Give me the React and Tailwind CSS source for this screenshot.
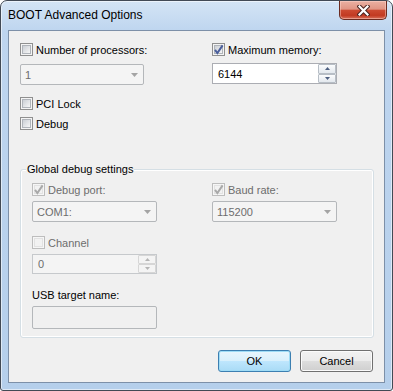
import React from 'react';

const ui = "font-['Liberation_Sans',Arial,sans-serif] text-[11px] leading-[14px]";

function CheckBox({ checked, disabled, label }) {
    return (
        <div className="flex h-[13px] items-center">
            <span
                className={`relative block h-[13px] w-[13px] shrink-0 border p-px ${
                    disabled ? 'border-[#bdbdbd] bg-[#f6f6f6]' : 'border-[#8f8f8f] bg-[#f4f4f4]'
                }`}
            >
                <span
                    className={`block h-full w-full border ${
                        disabled
                            ? 'border-[#e2e2e2] bg-[#f2f2f2]'
                            : 'border-[#b0b4ba] bg-[linear-gradient(135deg,#cbcfd5,#f6f6f6)]'
                    }`}
                />
                {checked && (
                    <svg className="absolute left-0 top-0" width="11" height="11" viewBox="0 0 11 11">
                        <path
                            d="M2 5.8 L4.4 9 L9.6 1.4"
                            fill="none"
                            stroke={disabled ? '#a9a9a9' : '#4b5f9c'}
                            strokeWidth="2"
                        />
                    </svg>
                )}
            </span>
            <span className={`ml-[3px] whitespace-nowrap ${disabled ? 'text-[#6d6d6d]' : 'text-black'}`}>{label}</span>
        </div>
    );
}

function ComboBox({ value, width = 'w-[125px]', className = '' }) {
    return (
        <div
            className={`flex h-[21px] ${width} items-center justify-between rounded-[2px] border border-[#b4b7ba] bg-[#f4f4f4] pl-[4px] pr-[5px] text-[#6d6d6d] ${className}`}
        >
            <span>{value}</span>
            <svg width="7" height="4" viewBox="0 0 7 4">
                <path d="M0 0 H7 L3.5 4 Z" fill="#a4a4a4" />
            </svg>
        </div>
    );
}

function SpinArrow({ up, disabled }) {
    return (
        <span
            className={`flex flex-1 items-center justify-center rounded-[1px] border ${
                disabled
                    ? 'border-[#d6d6d6] bg-[#f4f4f4]'
                    : 'border-[#b7bec6] bg-[linear-gradient(#fbfcfd,#e3e8ee)]'
            }`}
        >
            <svg width="5" height="3" viewBox="0 0 5 3">
                <path d={up ? 'M0 3 H5 L2.5 0 Z' : 'M0 0 H5 L2.5 3 Z'} fill={disabled ? '#b5b5b5' : '#4d5f80'} />
            </svg>
        </span>
    );
}

function SpinEdit({ value, disabled, height = 'h-[21px]', className = '' }) {
    return (
        <div
            className={`flex ${height} w-[125px] border ${
                disabled ? 'border-[#c6c9cc] bg-[#f4f4f4] text-[#6d6d6d]' : 'border-[#abadb3] bg-white text-black'
            } ${className}`}
        >
            <span className="flex flex-1 items-center pl-[5px]">{value}</span>
            <div className="flex w-[18px] flex-col">
                <SpinArrow up disabled={disabled} />
                <SpinArrow disabled={disabled} />
            </div>
        </div>
    );
}

function Button({ children, isDefault }) {
    return (
        <button
            className={`h-[22px] w-[73px] rounded-[3px] border text-black ${
                isDefault
                    ? 'border-[#3c7fb1] bg-[linear-gradient(#e8f5fd_0%,#d9f0fc_48%,#bee6fd_52%,#a9dbf6_100%)] shadow-[inset_0_0_0_1px_#9fdcf6]'
                    : 'border-[#707070] bg-[linear-gradient(#f2f2f2_0%,#ebebeb_48%,#dddddd_52%,#cfcfcf_100%)] shadow-[inset_0_0_0_1px_#fbfbfb]'
            }`}
        >
            {children}
        </button>
    );
}

export default function App() {
    return (
        <div className={`${ui} h-[391px] w-[393px]`}>
            <div className="flex h-full w-full flex-col rounded-t-[7px] rounded-b-[3px] border border-[#424a55] bg-[linear-gradient(#d4e4f5,#bed5ef_30px,#b5cfeb)] shadow-[inset_0_0_0_1px_rgba(255,255,255,0.55)]">
                {/* Title bar */}
                <div className="flex h-[29px] items-start justify-between pl-[7px] pr-[5px]">
                    <span className="mt-[7px] text-[12px] leading-[15px] text-black">BOOT Advanced Options</span>
                    <div className="flex h-[19px] w-[48px] items-center justify-center rounded-b-[5px] border border-t-0 border-[#6b2b20] bg-[linear-gradient(#eab0a2_0%,#e09584_45%,#cc4a31_52%,#c23a22_80%,#d8705a_100%)] shadow-[inset_0_0_0_1px_rgba(255,220,210,0.45)]">
                        <svg width="13" height="11" viewBox="0 0 13 11">
                            <path d="M2.5 1.5 L10.5 9.5 M10.5 1.5 L2.5 9.5" stroke="#4a2420" strokeWidth="4.2" strokeLinecap="square" />
                            <path d="M2.5 1.5 L10.5 9.5 M10.5 1.5 L2.5 9.5" stroke="#ffffff" strokeWidth="2.2" strokeLinecap="square" />
                        </svg>
                    </div>
                </div>

                {/* Client area */}
                <div className="mx-[7px] mb-[7px] flex flex-1 flex-col border border-[#7d90a8] bg-[#f0f0f0] pl-[11px] pr-[10px] pt-[12px]">
                    <div className="grid grid-cols-[192px_1fr]">
                        <div className="flex flex-col">
                            <CheckBox label="Number of processors:" />
                            <ComboBox value="1" width="w-[124px]" className="mt-[8px]" />
                            <div className="mt-[12px]">
                                <CheckBox label="PCI Lock" />
                            </div>
                            <div className="mt-[7px]">
                                <CheckBox label="Debug" />
                            </div>
                        </div>
                        <div className="flex flex-col">
                            <CheckBox checked label="Maximum memory:" />
                            <SpinEdit value="6144" className="mt-[7px]" />
                        </div>
                    </div>

                    {/* Global debug settings */}
                    <div className="relative mt-[39px] rounded-[3px] border border-[#d5dfe5] pb-[8px] pl-[11px] pt-[13px] shadow-[inset_0_0_0_1px_#ffffff]">
                        <span className="absolute -top-[8px] left-[5px] bg-[#f0f0f0] px-px text-black">Global debug settings</span>
                        <div className="grid grid-cols-[180px_1fr]">
                            <div className="flex flex-col">
                                <CheckBox checked disabled label="Debug port:" />
                                <ComboBox value="COM1:" className="mt-[5px]" />
                            </div>
                            <div className="flex flex-col">
                                <CheckBox checked disabled label="Baud rate:" />
                                <ComboBox value="115200" className="mt-[5px]" />
                            </div>
                        </div>
                        <div className="mt-[14px]">
                            <CheckBox disabled label="Channel" />
                        </div>
                        <SpinEdit value="0" disabled height="h-[20px]" className="mt-[5px]" />
                        <p className="mt-[14px] text-black">USB target name:</p>
                        <div className="mt-[4px] h-[23px] w-[125px] rounded-[2px] border border-[#b4b7ba] bg-[#f0f0f0]" />
                    </div>

                    <div className="mr-px mt-[12px] flex justify-end gap-[9px]">
                        <Button isDefault>OK</Button>
                        <Button>Cancel</Button>
                    </div>
                </div>
            </div>
        </div>
    );
}
